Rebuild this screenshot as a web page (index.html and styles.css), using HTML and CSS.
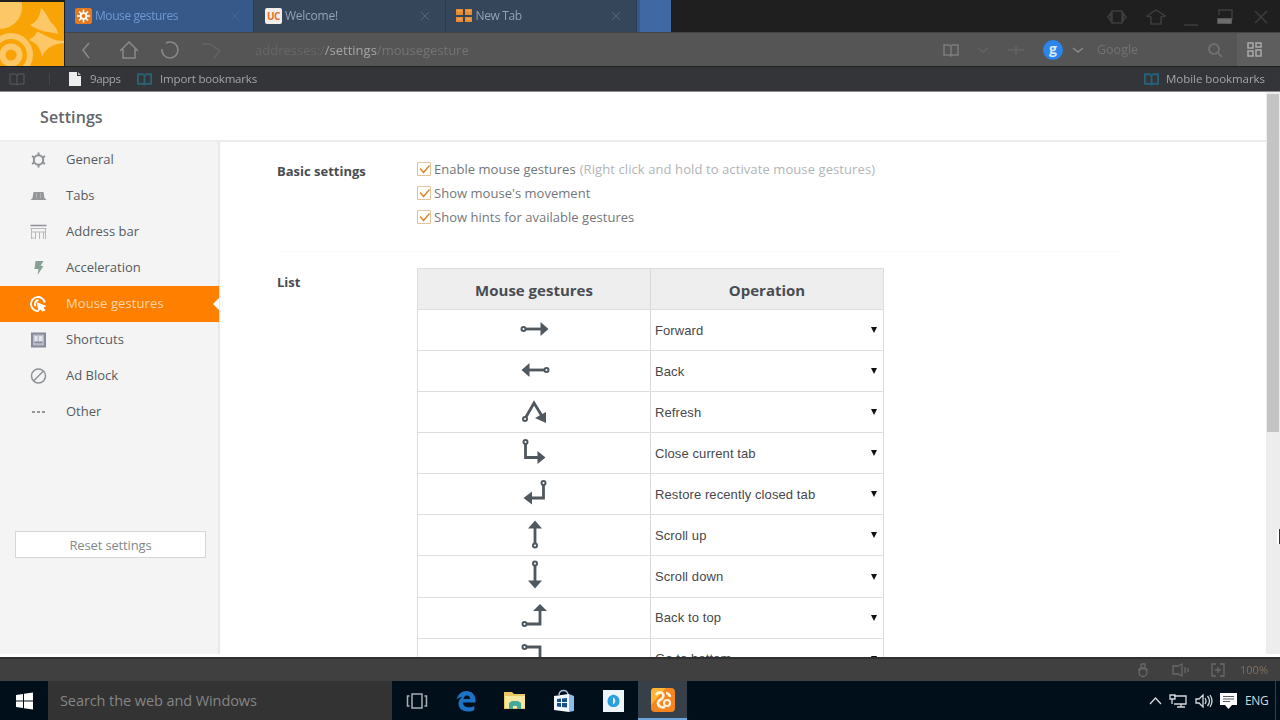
FILE: index.html
```html
<!DOCTYPE html>
<html lang="en">
<head>
<meta charset="utf-8">
<title>Settings - Mouse gestures</title>
<link rel="stylesheet" href="styles.css">
</head>
<body>
<svg class="defs" width="0" height="0">
  <defs>
    <symbol id="right" viewBox="0 0 30 30"><circle cx="3.500" cy="15" r="2"/><path d="M5.500 15H22"/><path class="fill" d="M20.500 8l8 7-8 7z"/></symbol>
    <symbol id="book" viewBox="0 0 18 14"><path d="M9 3v9M2 2h5l2 1 2-1h5v10h-5l-2 1-2-1H2z"/></symbol>
    <symbol id="close" viewBox="0 0 12 12"><path d="M2 2l8 8M10 2l-8 8"/></symbol>
    <symbol id="chev" viewBox="0 0 12 12"><path d="M1 4l5 4 5-4"/></symbol>
  </defs>
</svg>

<header class="browser">
  <div class="top">
    <svg class="logo" viewBox="0 0 64 64">
      <rect width="64" height="64" fill="#f9a406"/>
      <circle cx="0" cy="5" r="22" fill="#fcc766"/>
      <path d="M41 6c4 3 6 8 9 13 3 4 7 6 8 13-8-2-18-2-28-9 6-2 10-8 11-17z" fill="#fcc766"/>
      <path d="M64 39c-9 0-13-3-20-6-2-1-4-3-7-3-2 4-5 6-8 8 8 3 12 9 13 17 4-10 12-13 22-14z" fill="#fcc766"/>
      <circle cx="11" cy="53" r="19" fill="none" stroke="#fcc766" stroke-width="6"/>
      <circle cx="11" cy="53" r="8.500" fill="none" stroke="#fcc766" stroke-width="6"/>
    </svg>
    <div class="bars">
      <div class="tabs">
        <div class="tab active">
          <svg class="fav" viewBox="0 0 18 16"><rect x="1" width="17" height="16" rx="2" fill="#e47a20"/><path d="M9.500 1.500v13M3 8h13M5 3.500l9 9M14 3.500l-9 9" stroke="#fff" stroke-width="1.600"/><circle cx="9.500" cy="8" r="3.800" fill="#fff"/><circle cx="9.500" cy="8" r="2" fill="#e47a20"/></svg>
          <span class="tab-name t1">Mouse gestures</span><svg class="x"><use href="#close"/></svg>
        </div>
        <div class="tab">
          <span class="uc">UC</span><span class="tab-name t2">Welcome!</span><svg class="x"><use href="#close"/></svg>
        </div>
        <div class="tab">
          <svg class="fav" viewBox="0 0 18 16"><path d="M1 1h7v6H1zM10 1h7v6h-7zM1 9h7v5H1zM10 9h7v5h-7z" fill="#e78c31"/><path d="M2.500 3h4M11.500 3h4M2.500 11h4M11.500 11h4" stroke="#f0b47a"/></svg>
          <span class="tab-name t3">New Tab</span><svg class="x"><use href="#close"/></svg>
        </div>
        <div class="new-tab"></div>
        <div class="window-icons">
          <svg width="22" height="20" viewBox="0 0 22 20"><path d="M6 4h10v12H6zM2 10l3-4v8zM20 10l-3-4v8z"/></svg>
          <svg width="24" height="20" viewBox="0 0 24 20"><path d="M3 9l9-6 9 6-4 1v7H7v-7z"/></svg>
          <svg width="16" height="20" viewBox="0 0 16 20"><path d="M1 18h14"/></svg>
          <svg width="18" height="20" viewBox="0 0 18 20"><path d="M3 8V3h13v10"/><path d="M2 12h13v4H2z" fill="#6c6c6c" stroke="#6c6c6c"/></svg>
          <svg width="14" height="20" viewBox="0 0 14 20"><path d="M1 4l12 12M13 4L1 16"/></svg>
        </div>
      </div>
      <div class="address">
        <div class="nav-icons">
          <svg width="12" height="18" viewBox="0 0 12 18"><path d="M9 2L3 9l6 8"/></svg>
          <svg width="22" height="20" viewBox="0 0 22 20"><path d="M2 11l9-9 9 9M5 9v9h12V9"/></svg>
          <svg width="20" height="20" viewBox="0 0 20 20"><path d="M6 3a8 8 0 1 1-4 6" /></svg>
          <svg class="dim" width="26" height="20" viewBox="0 0 26 20"><path d="M2 4h8l10 7-6 7"/></svg>
        </div>
        <div class="url"><span class="host">addresses:/</span><span class="path">/settings</span><span class="rest">/mousegesture</span></div>
        <div class="tools">
          <svg width="18" height="14"><use href="#book"/></svg>
          <svg class="dim gap-a" width="12" height="12"><use href="#chev"/></svg>
          <svg class="dim gap-b" width="16" height="14" viewBox="0 0 16 14"><path d="M0 7h16M8 3v8"/></svg>
          <span class="google">g</span>
          <svg class="gap-c" width="12" height="12"><use href="#chev"/></svg>
          <span class="engine">Google</span>
          <svg class="mag" width="16" height="16" viewBox="0 0 16 16"><circle cx="7" cy="7" r="5"/><path d="M11 11l4 4"/></svg>
          <div class="apps"><svg width="16" height="16" viewBox="0 0 16 16"><path d="M1 1h5v5H1zM9 1h5v4H9zM1 9h5v5H1zM9 8h5v6H9z"/></svg></div>
        </div>
      </div>
    </div>
  </div>
  <div class="bookmarks">
    <svg width="18" height="14"><use href="#book"/></svg>
    <i class="bm-sep"></i>
    <svg class="page" width="12" height="14" viewBox="0 0 12 14"><path d="M0 0h8v4h4v10H0z" fill="#eee"/><path d="M9 0l3 3H9z" fill="#bbb"/></svg>
    <span class="bm-a">9apps</span>
    <svg class="bm-teal" width="17" height="14"><use href="#book"/></svg>
    <span class="bm-b">Import bookmarks</span>
    <svg class="bm-blue" width="17" height="14"><use href="#book"/></svg>
    <span class="bm-c">Mobile bookmarks</span>
  </div>
</header>

<section class="page-area">
  <main class="settings">
    <div class="title"><span>Settings</span></div>
    <div class="body">
      <aside class="side">
        <nav>
          <div class="item"><svg viewBox="0 0 16 16"><circle cx="8" cy="8" r="4.700" stroke-width="2"/><path d="M8 .5v2.800M8 12.700v2.800M1.500 4.200l2.500 1.400M12 10.400l2.500 1.400M14.500 4.200L12 5.600M4 10.400l-2.500 1.400" stroke-width="2"/></svg><span>General</span></div>
          <div class="item"><svg viewBox="0 0 16 16"><path class="solid" d="M0 12l2-2 1-6h10l1 6 2 2z"/><path d="M6 5v5M10 5v5" stroke="#b4b5b7" stroke-width=".8"/></svg><span>Tabs</span></div>
          <div class="item"><svg viewBox="0 0 16 16"><path d="M0 1.500h16"/><path d="M0 4.500h16M1 5v10M5 8v7M9 8v7M13 8v7M1 8h14M1 14h3M15 5v10" stroke="#b9b9b9" stroke-width="1"/></svg><span>Address bar</span></div>
          <div class="item"><svg viewBox="0 0 16 16"><path d="M5 1h8l-3 5h3l-6 9 1-6H4z" fill="#86a094" stroke="none"/></svg><span>Acceleration</span></div>
          <div class="item selected"><svg viewBox="0 0 16 16"><path d="M14.300 6.500A7 7 0 1 0 8 15M8 4a4 4 0 0 0-3 6" stroke-width="1.900"/><path d="M6 6l10 4-3 1.500 2 3-3 1-2-2-2 2z" fill="#fff" stroke="none"/></svg><span>Mouse gestures</span></div>
          <div class="item"><svg viewBox="0 0 16 16"><path d="M1.500 1.500h13v13h-13z" fill="#b9bbc8" stroke="#85899a" stroke-width="2"/><path d="M4 4h3v5H4zM8.500 4H12v5H8.500z" fill="#e3e4ea" stroke="none"/><path d="M4 10.500h8" stroke="#85899a" stroke-width="1.300"/></svg><span>Shortcuts</span></div>
          <div class="item"><svg viewBox="0 0 16 16"><circle cx="8" cy="8" r="7"/><path d="M3 13L13 3"/></svg><span>Ad Block</span></div>
          <div class="item"><svg viewBox="0 0 16 16"><path class="solid" d="M1.500 7h3v2h-3zM6.500 7h3v2h-3zM11.500 7h3v2h-3z"/></svg><span>Other</span></div>
        </nav>
        <button class="reset"><span>Reset settings</span></button>
      </aside>
      <div class="content">
        <div class="group basic">
          <h2>Basic settings</h2>
          <div class="checks">
            <label><svg class="box" viewBox="0 0 14 14"><path class="edge" d="M.5.500h13v13H.5z"/><path d="M3 6.500l3.500 4 6-7"/></svg><span class="c1">Enable mouse gestures</span><span class="hint">(Right click and hold to activate mouse gestures)</span></label>
            <label><svg class="box" viewBox="0 0 14 14"><path class="edge" d="M.5.500h13v13H.5z"/><path d="M3 6.500l3.500 4 6-7"/></svg><span class="c2">Show mouse's movement</span></label>
            <label><svg class="box" viewBox="0 0 14 14"><path class="edge" d="M.5.500h13v13H.5z"/><path d="M3 6.500l3.500 4 6-7"/></svg><span class="c3">Show hints for available gestures</span></label>
          </div>
        </div>
        <div class="group list">
          <h2>List</h2>
          <div class="grid">
            <div class="row head"><div>Mouse gestures</div><div>Operation</div></div>
            <div class="row"><div><svg class="g"><use href="#right"/></svg></div><div class="op"><span>Forward</span><i></i></div></div>
            <div class="row"><div><svg class="g flip"><use href="#right"/></svg></div><div class="op"><span>Back</span><i></i></div></div>
            <div class="row"><div><svg class="g" viewBox="0 0 30 30"><circle cx="5" cy="23" r="2"/><path d="M6 21l8-14 8 13"/><path class="fill" d="M15 22l11-6v11z"/></svg></div><div class="op"><span>Refresh</span><i></i></div></div>
            <div class="row"><div><svg class="g" viewBox="0 0 30 30"><circle cx="5.500" cy="5" r="2"/><path d="M5.500 7V20.500H18"/><path class="fill" d="M17.500 14l8 6.500-8 6.500z"/></svg></div><div class="op"><span>Close current tab</span><i></i></div></div>
            <div class="row"><div><svg class="g" viewBox="0 0 30 30"><circle cx="23.500" cy="5" r="2"/><path d="M23.500 7v13H10"/><path class="fill" d="M12 13.500L3.500 20l8.500 6.500z"/></svg></div><div class="op"><span>Restore recently closed tab</span><i></i></div></div>
            <div class="row"><div><svg class="g up"><use href="#right"/></svg></div><div class="op"><span>Scroll up</span><i></i></div></div>
            <div class="row"><div><svg class="g down"><use href="#right"/></svg></div><div class="op"><span>Scroll down</span><i></i></div></div>
            <div class="row"><div><svg class="g" viewBox="0 0 30 30"><circle cx="4.500" cy="23" r="2"/><path d="M6.500 23h13.500V9"/><path class="fill" d="M13 10l7-7 7 7z"/></svg></div><div class="op"><span>Back to top</span><i></i></div></div>
            <div class="row"><div><svg class="g" viewBox="0 0 30 30"><circle cx="4.500" cy="5" r="2"/><path d="M6.500 5h13.500V20"/><path class="fill" d="M13 20l7 7 7-7z"/></svg></div><div class="op"><span>Go to bottom</span><i></i></div></div>
          </div>
        </div>
      </div>
    </div>
  </main>
  <div class="scroll"><div class="thumb"></div></div>
  <div class="cursor"></div>
</section>

<div class="status">
  <svg width="14" height="16" viewBox="0 0 14 16"><path d="M5 2h4v4M5 2v4M2 8l3-2h4l3 2"/><circle cx="7" cy="10.500" r="4"/></svg>
  <svg width="22" height="16" viewBox="0 0 22 16"><path d="M2 4h5l4-2v12l-4-2H2zM14 5v6M17 6v4"/></svg>
  <svg width="16" height="16" viewBox="0 0 16 16"><path d="M6 2H2v12h4M10 2h4v12h-4M5 8h6M8 5v6"/></svg>
  <span class="zoom">100%</span>
</div>

<footer class="taskbar">
  <div class="start"><svg width="18" height="18" viewBox="0 0 18 18"><path d="M0 3l7-1v6.500H0zM8 1.800L17 .5v8H8zM0 9.500h7V16l-7-1zM8 9.500h9v8l-9-1.300z" fill="#fff"/></svg></div>
  <div class="search"><span>Search the web and Windows</span></div>
  <div class="app"><svg width="22" height="18" viewBox="0 0 22 18"><path d="M6 2h10v14H6zM3.500 4H1.500v10h2M18.500 4h2v10h-2" fill="none" stroke="#a9afb5" stroke-width="1.500"/></svg></div>
  <div class="app"><svg width="22" height="22" viewBox="0 0 22 22"><path d="M1.500 9.500C3 4 7 1 11.500 1 17 1 20.500 5 20.500 10v2.500H8c0 3.500 3 4.800 6 4.800 2 0 3.800-.5 5.300-1.300v4C17.500 21 15.500 21.500 13 21.500c-5.500 0-9.500-3-9.500-8 0-3 1.500-5 4-6.500C5 7 3 8 1.500 9.500zM8.500 9H15c0-2.300-1-3.600-3-3.600S8.900 6.800 8.500 9z" fill="#1c72c4"/></svg></div>
  <div class="app"><svg width="22" height="20" viewBox="0 0 22 20"><path d="M0 1h8l2 2h11v15H0z" fill="#e9c765"/><path d="M1 5h20v12H1z" fill="#f7e8a1"/><path d="M5 18v-6l3-2h6l3 2v6h-4v-3H9v3z" fill="#45a99c"/></svg></div>
  <div class="app"><svg width="22" height="24" viewBox="0 0 22 24"><path d="M6 6c0-6 9-6 9 0" fill="none" stroke="#a9c3e1" stroke-width="1.500"/><path d="M1 7l15-2v18L1 21z" fill="#f2f8ff"/><path d="M16 5l5 2v15l-5 1z" fill="#8dbce9"/><path d="M4 10l4-.5V13H4zM9 9.400l5-.5V13H9zM4 14h4v4l-4-.5zM9 14h5v4.500L9 18z" fill="#16508c"/></svg></div>
  <div class="app"><svg width="23" height="22" viewBox="0 0 23 22"><path d="M1 0h21v22H1z" fill="#edf5fb"/><path d="M11.500 4.500c4 1 6 3 6 6.500 0 4-2.500 6-6 6s-6-2-6-6c0-3.500 2-5.500 6-6.500z" fill="#2ba0dc"/><path d="M11 7.500c3 1 3 5.500 0 7z" fill="#eaf5fb"/></svg></div>
  <div class="app current"><svg width="26" height="24" viewBox="0 0 26 24"><rect x="1" width="24" height="24" rx="4" fill="#f5851f"/><path d="M4 0h12L1 17V4q0-4 3-4z" fill="#ffb534"/><path d="M6 7c3-5 9-2 7 2-1 3-6 3-5 7 1 3 4 4 7 3M16 5c2 0 4 2 4 4" fill="none" stroke="#fff3dc" stroke-width="2.600"/><circle cx="17" cy="15" r="3" fill="none" stroke="#fff3dc" stroke-width="2.200"/></svg></div>
  <div class="tray">
    <svg width="13" height="12" viewBox="0 0 13 12"><path d="M1 9l5.500-6L12 9"/></svg>
    <svg width="18" height="16" viewBox="0 0 18 16"><path d="M5 3h12v8H5M8 14h8M12 11v3M1 2h5v4H1zM3 6v5"/></svg>
    <svg width="18" height="16" viewBox="0 0 18 16"><path d="M1 6h3l4-4v12l-4-4H1zM10 5q2 3 0 6M12.500 3q4 5 0 10M15 2q4 6 0 12"/></svg>
    <svg width="17" height="17" viewBox="0 0 17 17"><path d="M0 1h17v12h-5l-3.500 4L5 13H0z" fill="#fff" stroke="none"/><path d="M3 4.500h11M3 7h11M3 9.500h7" stroke="#525a60" stroke-width="1"/></svg>
    <span class="eng">ENG</span><i></i>
  </div>
</footer>
</body>
</html>
```

FILE: styles.css
```css
* { box-sizing: border-box; }
body { margin: 0; width: 1280px; height: 720px; overflow: hidden; display: flex; flex-direction: column; font: 13px/18px "Open Sans", "Noto Sans", sans-serif; background: #fff; }
span { white-space: nowrap; }
svg { flex: none; display: block; }
.defs { position: absolute; }

/* browser frame */
.browser { flex: none; height: 92px; background: #343539; border-bottom: 1px solid #8b8b8d; }
.top { display: flex; height: 67px; background: #201f20; }
.logo { width: 64px; height: 64px; margin: 2px 1px 0 0; }
.bars { flex: 1; }
.tabs { display: flex; height: 33px; border-bottom: 1px solid #444; }
.tab { display: flex; align-items: center; width: 191.500px; padding: 0 12px 0 9px; background: #35455a; border-right: 1px solid #2a3a50; color: #94a2b4; }
.tab.active { width: 189px; background: #37598a; color: #6f99d2; }
.fav { width: 18px; height: 16px; margin-right: 3px; }
.tab-name { flex: 1; font-size: 12px; letter-spacing: -.35px; filter: blur(.5px); }
.t1 { letter-spacing: -.42px; }
.t2 { letter-spacing: -.25px; }
.uc { width: 17px; height: 16px; margin: 0 3px 0 2px; background: #f4eeea; border-radius: 2px; color: #e2702c; font-weight: 700; font-size: 10px; line-height: 16px; text-align: center; letter-spacing: -.5px; }
.x { width: 12px; height: 12px; margin-right: 2px; fill: none; stroke: #56667b; }
.active .x { stroke: #42639a; margin-right: 0; }
.new-tab { width: 34px; background: #4069a3; border-left: 3px solid #35598d; }
.window-icons { display: flex; gap: 15.500px; align-items: center; margin-left: auto; padding: 3px 12px 0 0; fill: none; stroke: #3e3d3e; stroke-width: 1.500; }
.window-icons svg { margin-bottom: 1px; }
.window-icons svg:nth-child(4) { margin-right: 5px; margin-left: 1px; }
.address { display: flex; align-items: center; height: 33px; background: #555; fill: none; stroke: #8a8a8a; stroke-width: 1.500; color: #858585; }
.nav-icons { display: flex; align-items: center; width: 190px; padding-left: 15px; gap: 26px; }
.nav-icons svg:nth-child(n+3) { margin-left: -6px; }
.address .dim { stroke: #646464; }
.url { font-size: 13px; filter: blur(.6px); }
.host { color: #666; }
.path { color: #a4a4a4; }
.rest { color: #747474; }
.tools { display: flex; align-items: center; margin-left: auto; height: 33px; }
.tools > svg:first-child { margin-right: 8px; stroke: #7c7c7c; }
.gap-a { margin-left: 9px; }
.gap-b { margin-left: 19px; }
.gap-c { margin-left: 9px; }
.google { width: 20px; height: 20px; margin-left: 19px; border-radius: 50%; background: #2b85ec; color: #d8eaff; font-weight: 700; font-size: 14px; line-height: 17px; text-align: center; }
.engine { width: 123px; padding-left: 13px; font-size: 12.500px; color: #727272; filter: blur(.6px); }
.mag { margin-right: 14px; stroke: #777; }
.apps { display: flex; align-items: center; width: 43px; height: 33px; padding-left: 10px; background: #5e5e5e; stroke: #aaa; }
.bookmarks { display: flex; align-items: center; height: 24px; padding: 0 15px 0 8px; font-size: 11.500px; color: #a5a5a7; fill: none; stroke: #5c5c61; }
.bookmarks span { filter: blur(.4px); letter-spacing: -.17px; }
.bm-sep { width: 1px; height: 12px; margin: 0 19px 0 23px; background: #44444a; }
.page { stroke: none; }
.bookmarks .bm-a { margin-left: 9px; width: 46px; letter-spacing: -.4px; }
.bm-teal { stroke: #2d6072; stroke-width: 2; }
.bm-b { margin-left: 7px; }
.bm-blue { margin-left: auto; stroke: #25617d; stroke-width: 2; }
.bookmarks .bm-c { margin-left: 6px; letter-spacing: -.05px; }

/* settings page */
.page-area { position: relative; display: flex; flex: none; height: 565px; overflow: hidden; }
.settings { width: 1266px; display: flex; flex-direction: column; }
.title { flex: none; display: flex; align-items: center; height: 50px; padding: 1px 0 0 40px; border-bottom: 2px solid #ececec; color: #62666b; font-weight: 600; font-size: 16px; }
.title span { letter-spacing: .1px; }
.body { display: flex; height: 515px; }
.side { width: 220px; height: 512px; background: #f4f4f4; border-right: 2px solid #e9e9e9; color: #575b60; }
.item { position: relative; display: flex; align-items: center; height: 36px; padding-left: 30px; width: 219px; }
.item span { margin-top: -2px; }
.item svg { width: 17px; height: 16px; margin-right: 19px; fill: none; stroke: #8f9296; stroke-width: 1.500; }
.item .solid { fill: #94969a; stroke: none; }
.item.selected { background: #ff7f00; color: #ffd5a8; }
.item.selected span { letter-spacing: .1px; }
.item.selected svg { stroke: #fff; }
.item.selected::after { content: ""; position: absolute; right: 0; top: 12px; border: 6px solid transparent; border-right-color: #fff; border-left: 0; }
.reset { display: block; width: 191px; height: 27px; margin: 101px 0 0 15px; padding: 0; border: 1px solid #d6d6d6; background: #fff; color: #85888b; font: 13px/24px "Open Sans", sans-serif; letter-spacing: -.15px; }
.content { flex: 1; padding: 17px 0 0 57px; }
.group { display: flex; }
.basic { width: 844px; height: 93px; border-bottom: 1px solid #fafafa; }
h2 { width: 140px; margin: 3px 0 0; font-size: 13px; line-height: 18px; color: #484c50; }
.checks label { display: flex; align-items: center; height: 18px; margin-bottom: 6px; color: #74777a; }
.checks { padding-top: 1px; }
.checks label span { margin-top: -1px; }
.box { width: 14px; height: 14px; margin-right: 3px; fill: none; stroke: #df8b2f; stroke-width: 1.500; margin-top: -1px; }
.edge { stroke: #e3c397; stroke-width: 1; }
.c1, .c2, .c3 { letter-spacing: .03px; }
.checks label .hint { margin-left: 4px; color: #b2b4b6; letter-spacing: .09px; }
.list { padding-top: 16px; }
.list h2 { margin-top: 5px; }
.grid { width: 467px; border: 1px solid #ddd; border-bottom: 0; }
.row { display: grid; grid-template-columns: 233px 232px; height: 41.080px; border-bottom: 1px solid #dedede; }
.row > div { display: flex; justify-content: center; align-items: center; }
.row > div:first-child { border-right: 1px solid #d9d9d9; }
.row.head { background: #eee; height: 41px; color: #474d52; font-weight: 700; font-size: 15px; }
.row.head > div { padding-top: 2px; }
.row > .op { justify-content: space-between; padding: 1px 6px 0 4px; font: 13px/18px "Liberation Sans", Arial, sans-serif; letter-spacing: .1px; color: #47474a; }
.op i { border: 3.500px solid transparent; border-top: 6px solid #111; border-bottom: 0; margin-bottom: 1px; }
.g { width: 30px; height: 30px; margin: 0 0 3px 1px; fill: none; stroke: #50585f; stroke-width: 2.800; }
.g circle, #right circle { stroke-width: 2; }
.fill { fill: #50585f; stroke: none; }
.flip { transform: scaleX(-1); }
.up { transform: rotate(-90deg); }
.down { transform: rotate(90deg); }
.scroll { width: 14px; height: 562px; padding: 2px 1px 0; background: #ededed; }
.thumb { height: 338px; background: #c4c4c4; }
.cursor { position: absolute; right: 0; top: 437px; width: 3px; height: 15px; background: #333; border-left: 2px solid #fff; }

/* bottom bars */
.status { flex: none; display: flex; align-items: center; justify-content: flex-end; height: 24px; padding-right: 12px; background: #404040; border-top: 2px solid #303030; fill: none; stroke: #696969; stroke-width: 1.300; }
.status svg:nth-child(2) { margin-left: 21px; }
.status svg:nth-child(3) { margin-left: 17px; }
.zoom { margin-left: 14px; color: #80705f; font-size: 11px; filter: blur(.3px); }
.taskbar { flex: none; display: flex; height: 39px; background: #010f1a; }
.start { display: flex; align-items: center; width: 48px; padding-left: 16px; }
.search { display: flex; align-items: center; width: 344px; padding-left: 12px; background: #333; color: #858585; font-size: 14.500px; }
.search span { letter-spacing: -.08px; }
.app { display: flex; align-items: center; justify-content: center; width: 49.200px; }
.current { background: #374049; border-bottom: 2px solid #6aa5dc; }
.tray { display: flex; align-items: center; margin-left: auto; gap: 7.500px; fill: none; stroke: #d5d9dc; stroke-width: 1.300; color: #d3d6d8; font-size: 12px; }
.eng { letter-spacing: -.3px; }
.tray i { width: 1px; height: 39px; margin-left: -1px; margin-right: 4px; background: #33404a; }
```
